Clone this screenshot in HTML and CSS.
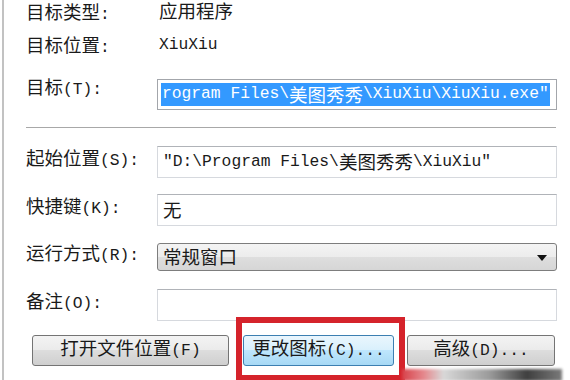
FILE: index.html
```html
<!DOCTYPE html>
<html lang="zh-CN">
<head>
    <meta charset="UTF-8">
    <title>XiuXiu 属性</title>
    <link rel="stylesheet" href="styles.css">
</head>
<body>
<div class="panel">
    <div class="row info">
        <span class="label"><span class="zh">目标类型</span>:</span>
        <span class="value"><span class="zh">应用程序</span></span>
    </div>
    <div class="row info second">
        <span class="label"><span class="zh">目标位置</span>:</span>
        <span class="value">XiuXiu</span>
    </div>
    <div class="row target">
        <span class="label"><span class="zh">目标</span>(T):</span>
        <div class="field dark"><span class="selected">rogram Files\<span class="zh">美图秀秀</span>\XiuXiu\XiuXiu.exe"</span></div>
    </div>

    <div class="sep"></div>

    <div class="row start">
        <span class="label"><span class="zh">起始位置</span>(S):</span>
        <div class="field">"D:\Program Files\<span class="zh">美图秀秀</span>\XiuXiu"</div>
    </div>
    <div class="row hotkey">
        <span class="label"><span class="zh">快捷键</span>(K):</span>
        <div class="field"><span class="zh">无</span></div>
    </div>
    <div class="row run">
        <span class="label"><span class="zh">运行方式</span>(R):</span>
        <div class="select">
            <span class="zh">常规窗口</span>
            <span class="arrow"></span>
        </div>
    </div>
    <div class="row note">
        <span class="label"><span class="zh">备注</span>(O):</span>
        <div class="field"></div>
    </div>

    <div class="buttons">
        <button class="btn open"><span class="zh">打开文件位置</span>(F)</button>
        <button class="btn icon hot"><span class="zh">更改图标</span>(C)...</button>
        <button class="btn adv"><span class="zh">高级</span>(D)...</button>
    </div>

    <!-- annotation drawn over the dialog -->
    <div class="mark"></div>
    <div class="smear"></div>
</div>
</body>
</html>
```

FILE: styles.css
```css
body {
    margin: 0;
    padding: 0;
    background-color: #ffffff;
    font-family: "Liberation Mono", "Noto Sans CJK SC", monospace;
    font-size: 16.3px;
    color: #1a1a1a;
}
.zh {
    font-family: "Noto Sans CJK SC", sans-serif;
    font-size: 18.5px;
}
.panel {
    position: relative;
    height: 380px;
    margin-left: 2px;
    border-left: 2px solid #c2c2c2;
    overflow: hidden;
}
.row {
    display: flex;
    align-items: center;
    padding-left: 22px;
    line-height: 1.25;
}
.label {
    width: 131px;
    flex-shrink: 0;
    padding-bottom: 6px;
    white-space: nowrap;
}
.value {
    padding-left: 2px;
    padding-bottom: 2px;
}
.info {
    height: 24px;
    padding-top: 1px;
}
.info .label {
    padding-bottom: 0;
}
.info.second {
    margin-top: 8px;
}
.target {
    margin-top: 21px;
    height: 31px;
}
.target .label {
    padding-bottom: 14px;
}
.field {
    box-sizing: border-box;
    width: 400px;
    height: 32px;
    border: 1px solid #d6d9de;
    border-top-color: #b0b3b8;
    padding-left: 5px;
    display: flex;
    align-items: center;
    white-space: nowrap;
    overflow: hidden;
}
.field.dark {
    height: 31px;
    border-color: #a3a6ab;
    padding-left: 3px;
}
.selected {
    display: inline-flex;
    align-items: center;
    height: 23px;
    padding: 0 1px;
    background-color: #3399ff;
    color: #ffffff;
}
.sep {
    margin: 17px 0 0 22px;
    width: 530px;
    height: 0;
    border-top: 1px solid #a8a8a8;
    border-bottom: 1px solid #ffffff;
}
.start {
    margin-top: 17px;
    height: 32px;
}
.hotkey {
    margin-top: 16px;
    height: 32px;
}
.run {
    margin-top: 17px;
    height: 28px;
}
.note {
    margin-top: 18px;
    height: 32px;
}
.select {
    position: relative;
    box-sizing: border-box;
    width: 400px;
    height: 28px;
    border: 1px solid #7d7d7d;
    border-radius: 3px;
    padding-left: 5px;
    display: flex;
    align-items: center;
    background: linear-gradient(#f4f4f4 0%, #ececec 50%, #dedede 51%, #d6d6d6 100%);
}
.arrow {
    position: absolute;
    right: 9px;
    top: 11px;
    width: 0;
    height: 0;
    border-left: 5px solid transparent;
    border-right: 5px solid transparent;
    border-top: 6px solid #111111;
}
.buttons {
    display: flex;
    margin-top: 14px;
    padding-left: 28px;
}
.btn {
    box-sizing: border-box;
    height: 31px;
    border: 1px solid #747474;
    border-radius: 3px;
    background: linear-gradient(#f3f3f3 0%, #ebebeb 48%, #dddddd 50%, #cfcfcf 100%);
    font-family: "Liberation Mono", "Noto Sans CJK SC", monospace;
    font-size: 16.3px;
    color: #1a1a1a;
    padding: 0 0 3px 0;
    line-height: 1;
    text-align: center;
}
.btn.open {
    width: 197px;
}
.btn.icon {
    width: 151px;
    margin-left: 14px;
}
.btn.hot {
    border-color: #3c7fb1;
    background: linear-gradient(#eaf6fd 0%, #d9f0fc 48%, #bee6fd 50%, #a7d9f5 100%);
}
.btn.adv {
    width: 148px;
    margin-left: 13px;
}
.mark {
    position: absolute;
    left: 232px;
    top: 317px;
    width: 169px;
    height: 64px;
    box-sizing: border-box;
    border: 6px solid #d5232b;
}
.smear {
    position: absolute;
    left: 398px;
    top: 369px;
    width: 160px;
    height: 12px;
    background: linear-gradient(to right, #d7424a 0%, #e58a8f 14%, #d8d8d8 26%, #9a9a9a 55%, #3f3f3f 78%, #7a7a7a 100%);
    filter: blur(1.5px);
}
```
